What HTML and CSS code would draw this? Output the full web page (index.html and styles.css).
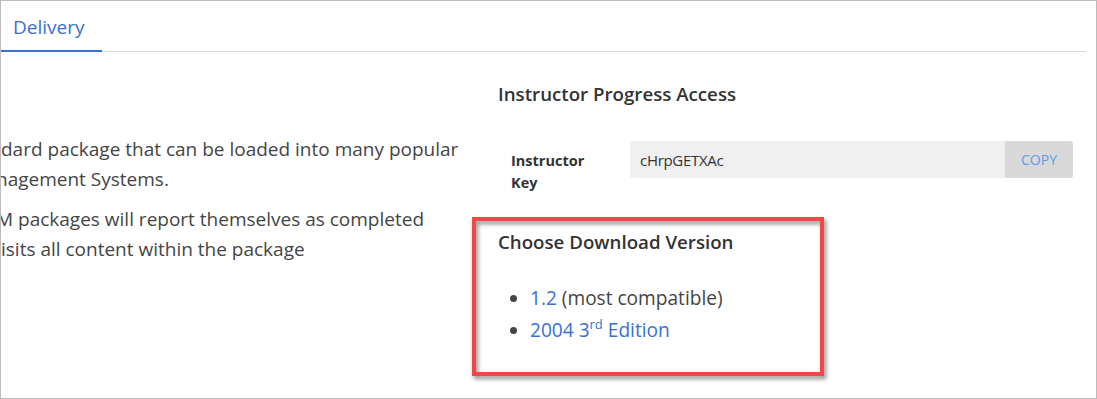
FILE: index.html
```html
<!DOCTYPE html>
<html lang="en">
<head>
<meta charset="utf-8">
<title>Delivery</title>
<link rel="stylesheet" href="styles.css">
</head>
<body>
<div class="frame">
  <nav class="tabs">
    <a class="tab tab-active" href="#">Delivery</a>
  </nav>
  <div class="content">
    <div class="col-left">
      <p class="para">
        <span class="line">dard package that can be loaded into many popular</span>
        <span class="line line-cut-n">nagement Systems.</span>
      </p>
      <p class="para">
        <span class="line line-cut-m">M packages will report themselves as completed</span>
        <span class="line">isits all content within the package</span>
      </p>
    </div>
    <div class="col-right">
      <h3 class="heading">Instructor Progress Access</h3>
      <div class="key-row">
        <div class="key-label">Instructor<br>Key</div>
        <div class="key-field">
          <span class="key-value">cHrpGETXAc</span>
          <button class="copy-btn" type="button">COPY</button>
        </div>
      </div>
      <section class="download">
        <h3 class="heading">Choose Download Version</h3>
        <ul class="versions">
          <li><a class="link" href="#">1.2</a> (most compatible)</li>
          <li><a class="link" href="#">2004 3<sup class="sup">rd</sup> Edition</a></li>
        </ul>
        <div class="highlight"></div>
      </section>
    </div>
  </div>
</div>
</body>
</html>
```
FILE: styles.css
```css
* { box-sizing: border-box; }

body {
  margin: 0;
  background: #fff;
  font-family: "Open Sans", "Noto Sans", sans-serif;
  color: #454545;
}

.frame {
  width: 1097px;
  height: 399px;
  border: 1px solid #bcbcbc;
  overflow: hidden;
}

.tabs {
  display: flex;
  height: 51px;
  margin-right: 10px;
  border-bottom: 1px solid #dcdcdc;
}

.tab {
  display: flex;
  align-items: center;
  width: 101px;
  height: 51px;
  margin-bottom: -1px;
  padding: 2px 0 0 12px;
  border-bottom: 2px solid #3a70d4;
  color: #3a70d4;
  font-size: 19px;
  text-decoration: none;
}

.content {
  display: flex;
}

.col-left {
  width: 470px;
  overflow: hidden;
  padding-top: 82px;
  font-size: 19px;
  line-height: 30px;
}

.para {
  margin: 0 0 10px;
}

.line {
  display: block;
  white-space: nowrap;
}

.line-cut-n { margin-left: -5px; }
.line-cut-m { margin-left: -5px; }

.col-right {
  flex: 1;
  padding: 30px 23px 0 27px;
}

.heading {
  margin: 0;
  font-size: 18.7px;
  font-weight: 600;
  line-height: 24px;
  color: #333;
}

.key-row {
  display: flex;
  align-items: flex-start;
  margin-top: 35px;
}

.key-label {
  width: 132px;
  padding: 9px 0 0 13px;
  font-size: 14.5px;
  font-weight: 700;
  line-height: 22px;
  color: #333;
}

.key-field {
  flex: 1;
  display: flex;
  align-items: stretch;
  height: 37px;
  background: #f0f0f0;
  border-radius: 3px;
}

.key-value {
  flex: 1;
  display: flex;
  align-items: center;
  padding-left: 10px;
  font-size: 15px;
  letter-spacing: -0.3px;
  color: #333;
}

.copy-btn {
  width: 68px;
  border: 0;
  border-radius: 0 3px 3px 0;
  background: #d9d9d9;
  color: #5b9ce6;
  font-family: inherit;
  font-size: 14px;
  padding: 0;
}

.download {
  position: relative;
  margin-top: 36px;
}

.versions {
  margin: 28px 0 0;
  padding-left: 32px;
  font-size: 19.1px;
  line-height: 32px;
}

.link {
  color: #3a70d4;
  text-decoration: none;
}

.sup {
  font-size: 13px;
  line-height: 0;
  vertical-align: 8px;
}

.highlight {
  position: absolute;
  left: -26px;
  top: -13px;
  width: 352px;
  height: 159px;
  border: 4px solid #f04848;
  filter: drop-shadow(2px 3px 2px rgba(0, 0, 0, 0.45));
  pointer-events: none;
}
```
